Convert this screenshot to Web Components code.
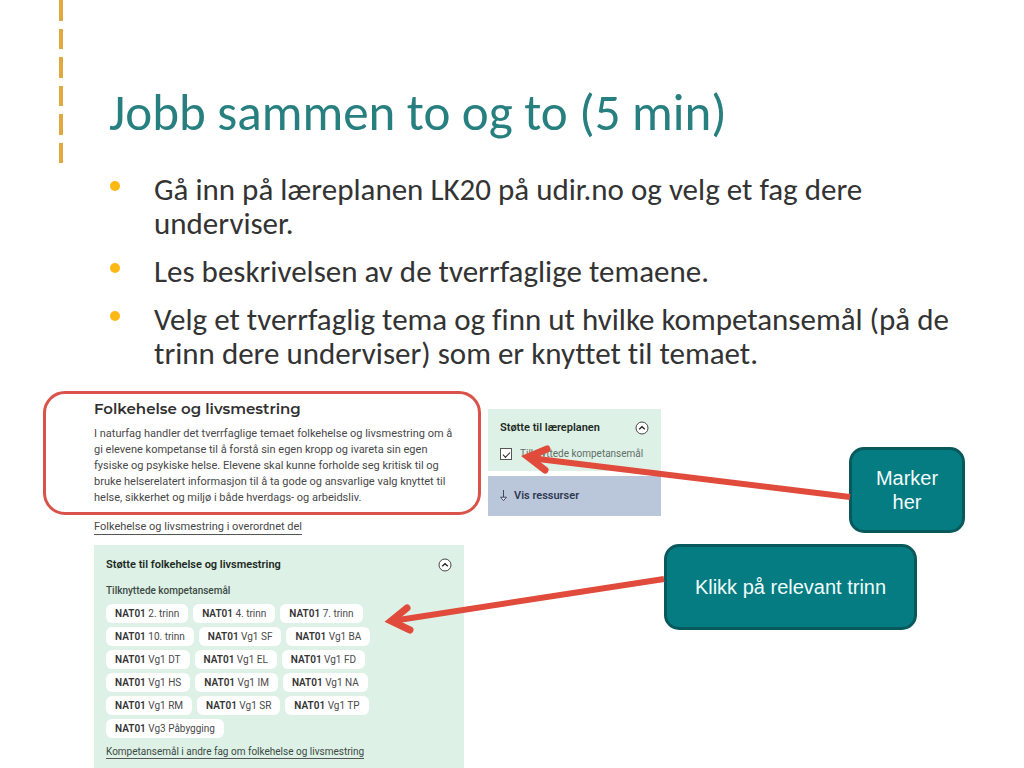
<!DOCTYPE html>
<html lang="no">
<head>
<meta charset="utf-8">
<meta name="viewport" content="width=device-width, initial-scale=1">
<title>Jobb sammen to og to</title>
<style>
  body { margin: 0; background: #fff; color: #333; font-family: Roboto, "Liberation Sans", sans-serif; }
</style>
</head>
<body>
<lesson-slide>
  <slide-header slot="header">Jobb sammen to og to (5 min)</slide-header>
  <task-list slot="tasks">
    <task-item>Gå inn på læreplanen LK20 på udir.no og velg et fag dere underviser.</task-item>
    <task-item>Les beskrivelsen av de tverrfaglige temaene.</task-item>
    <task-item>Velg et tverrfaglig tema og finn ut hvilke kompetansemål (på de trinn dere underviser) som er knyttet til temaet.</task-item>
  </task-list>
  <theme-description slot="theme">
    <span slot="title">Folkehelse og livsmestring</span>
    I naturfag handler det tverrfaglige temaet folkehelse og livsmestring om å gi elevene kompetanse til å forstå sin egen kropp og ivareta sin egen fysiske og psykiske helse. Elevene skal kunne forholde seg kritisk til og bruke helserelatert informasjon til å ta gode og ansvarlige valg knyttet til helse, sikkerhet og miljø i både hverdags- og arbeidsliv.
  </theme-description>
  <text-link slot="theme" class="overview">Folkehelse og livsmestring i overordnet del</text-link>
  <goal-panel slot="theme"></goal-panel>
  <curriculum-support slot="support"></curriculum-support>
  <call-out slot="notes" class="narrow">Marker her</call-out>
  <call-out slot="notes" class="wide">Klikk på relevant trinn</call-out>
  <pointer-arrows slot="arrows"></pointer-arrows>
</lesson-slide>

<script>
const define = (name, html, setup) => {
  const template = document.createElement('template');
  template.innerHTML = html;
  customElements.define(name, class extends HTMLElement {
    constructor() {
      super();
      this.attachShadow({ mode: 'open' }).append(template.content.cloneNode(true));
      if (setup) setup(this.shadowRoot);
    }
  });
};

define('lesson-slide', `
  <style>
    :host { display: block; min-height: 100vh; }
    .figure {
      position: relative; display: grid; margin-top: 21px; padding: 0 59px 0 43px;
      grid-template-columns: minmax(0, 445fr) minmax(0, 173fr) minmax(0, 304fr);
    }
    .theme { display: flex; flex-direction: column; }
    .support { padding-top: 18px; }
    .notes { display: flex; flex-direction: column; gap: 11px; padding: 56px 0 0 3px; }
    ::slotted(.overview) { margin: 5px 0 0 51px; }
    ::slotted(goal-panel) { margin: 10px 24px 0 51px; }
    ::slotted(theme-description) { margin-right: 7px; }
    ::slotted(.narrow) { width: 116px; align-self: flex-end; }
    ::slotted(.wide) { width: 253px; align-self: flex-start; }
  </style>
  <slot name="header"></slot>
  <main>
    <slot name="tasks"></slot>
    <section class="figure">
      <div class="theme"><slot name="theme"></slot></div>
      <div class="support"><slot name="support"></slot></div>
      <div class="notes"><slot name="notes"></slot></div>
      <slot name="arrows"></slot>
    </section>
  </main>`);

define('slide-header', `
  <style>
    :host { display: block; }
    header { display: flex; gap: 46px; padding-left: 59px; height: 163px; }
    .dashes { display: flex; flex-direction: column; gap: 8px; width: 4px; }
    .dashes i { flex: 1; background: #dfa840; }
    h1 { margin: 84px 0 0; font: 400 51px/58px Carlito, Lato, sans-serif; font-variant-ligatures: none; color: #27807f; }
  </style>
  <header>
    <div class="dashes" aria-hidden="true"><i></i><i></i><i></i><i></i><i></i><i></i></div>
    <h1><slot></slot></h1>
  </header>`);

define('task-list', `
  <style>
    :host { display: block; }
    div { display: flex; flex-direction: column; gap: 14px; padding: 9px 59px 0 110px; }
  </style>
  <div role="list"><slot></slot></div>`);

define('task-item', `
  <style>
    :host { display: block; }
    div { display: flex; gap: 34px; font: 400 31px/34px Carlito, Lato, sans-serif; font-variant-ligatures: none; color: #333; }
    i { flex: none; width: 10px; height: 10px; margin-top: 9px; border-radius: 50%; background: #fdb913; }
  </style>
  <div role="listitem"><i></i><span><slot></slot></span></div>`);

define('theme-description', `
  <style>
    :host { display: block; }
    article { padding: 5px 20px 6px 48px; border: 3px solid #d9534a; border-radius: 22px; }
    h2 { margin: 0 0 7px; font: 600 15px/20px Montserrat, Inter, sans-serif; color: #303030; }
    p { margin: 0; font-size: 11px; line-height: 16px; color: #484848; }
  </style>
  <article>
    <h2><slot name="title"></slot></h2>
    <p><slot></slot></p>
  </article>`);

define('text-link', `
  <style>
    :host { display: block; font-size: 11px; line-height: 14px; color: #484848; }
    a { display: inline-block; color: inherit; text-decoration: none; border-bottom: 1px solid #555; }
  </style>
  <a href="#"><slot></slot></a>`);

define('collapse-button', `
  <style>
    :host { display: block; }
    button { display: block; width: 14px; height: 14px; padding: 0; border: 0; background: none; }
    svg { display: block; }
  </style>
  <button type="button" aria-label="Skjul">
    <svg width="14" height="14" viewBox="0 0 14 14" fill="none">
      <circle cx="7" cy="7" r="6" fill="#fff" stroke="#333" stroke-width=".9"/>
      <path d="M4.2 8.2 7 5.7l2.8 2.5" stroke="#222" stroke-width="1.3"/>
    </svg>
  </button>`);

define('grade-chip', `
  <style>
    :host { display: block; }
    a { display: block; padding: 0 9px; border-radius: 6px; background: #fff; color: #4a4a4a;
        font-size: 10px; line-height: 19px; text-decoration: none; white-space: nowrap; }
    b { font-weight: 600; color: #333; }
  </style>
  <a href="#"><b>NAT01</b> <slot></slot></a>`);

define('goal-panel', `
  <style>
    :host { display: block; flex: 1; background: #def1e6; }
    section { padding: 12px 12px 9px 12px; }
    .top { display: flex; justify-content: space-between; align-items: center; }
    h3 { margin: 0; font-size: 11px; line-height: 16px; font-weight: 600; color: #1c2a24; }
    h4 { margin: 10px 0 5px; font-size: 10px; line-height: 16px; font-weight: 500; color: #3c4a44; }
    .chips { display: flex; flex-wrap: wrap; gap: 4px 5px; padding-right: 70px; margin-bottom: 7px; }
    text-link { font-size: 10px; line-height: 13px; color: #3c4a44; }
  </style>
  <section>
    <div class="top"><h3>Støtte til folkehelse og livsmestring</h3><collapse-button></collapse-button></div>
    <h4>Tilknyttede kompetansemål</h4>
    <div class="chips"></div>
    <text-link>Kompetansemål i andre fag om folkehelse og livsmestring</text-link>
  </section>`, root => {
  const grades = ['2. trinn', '4. trinn', '7. trinn', '10. trinn', 'Vg1 SF', 'Vg1 BA', 'Vg1 DT', 'Vg1 EL',
    'Vg1 FD', 'Vg1 HS', 'Vg1 IM', 'Vg1 NA', 'Vg1 RM', 'Vg1 SR', 'Vg1 TP', 'Vg3 Påbygging'];
  root.querySelector('.chips').append(...grades.map(grade => {
    const chip = document.createElement('grade-chip');
    chip.textContent = grade;
    return chip;
  }));
});

define('curriculum-support', `
  <style>
    :host { display: flex; flex-direction: column; gap: 5px; }
    section { padding: 11px 12px 9px 12px; background: #def1e6; }
    .top { display: flex; justify-content: space-between; align-items: center; }
    h3 { margin: 0; font-size: 11px; line-height: 16px; font-weight: 600; color: #1c2a24; }
    label { display: flex; align-items: center; gap: 8px; margin-top: 10px; font-size: 10px; line-height: 16px;
            color: #5e6f67; white-space: nowrap; }
    input { appearance: none; box-sizing: border-box; flex: none; display: grid; place-items: center;
            width: 12px; height: 12px; margin: 0; border: 1px solid #555; background: #fff; }
    input:checked::before { content: ""; width: 6px; height: 3px; border: solid #222; border-width: 0 0 1px 1px;
            transform: rotate(-45deg); }
    button { display: flex; align-items: center; gap: 7px; width: 100%; height: 40px; padding: 0 12px; border: 0;
             background: #bac6da; font: 600 11px/16px Roboto, sans-serif; color: #2f3a52; }
  </style>
  <section>
    <div class="top"><h3>Støtte til læreplanen</h3><collapse-button></collapse-button></div>
    <label><input type="checkbox" checked>Tilknyttede kompetansemål</label>
  </section>
  <button type="button">
    <svg width="7" height="12" viewBox="0 0 7 12" fill="none" stroke="#2f3a52" stroke-width=".9">
      <path d="M3.5 0v7"/><path d="M.6 7.2h5.8L3.5 10.6z" fill="#eef2f8"/>
    </svg>
    Vis ressurser
  </button>`);

define('call-out', `
  <style>
    :host { display: block; }
    div { display: flex; box-sizing: border-box; min-height: 86px; align-items: center; justify-content: center;
          padding: 10px 20px; border: 3px solid #08595c; border-radius: 15px; background: #047c82;
          font: 400 20px/24px "Liberation Sans", sans-serif; color: #f2fbfb; text-align: center; }
  </style>
  <div><span><slot></slot></span></div>`);

define('pointer-arrows', `
  <style>
    :host { position: absolute; inset: 0; pointer-events: none; }
    svg { display: block; width: 100%; height: 377px; }
  </style>
  <svg viewBox="0 391 1024 377" preserveAspectRatio="none" fill="none" stroke="#e04b3b" stroke-width="6" stroke-linecap="round" aria-hidden="true">
    <path stroke-linecap="butt" d="M850 497 530 458"/>
    <path stroke-width="7" d="M547 449 528 457 545 470"/>
    <path stroke-linecap="butt" d="M664 579 392 621"/>
    <path stroke-width="7" d="M407 608 391 621 410 630"/>
  </svg>`);
</script>
</body>
</html>
